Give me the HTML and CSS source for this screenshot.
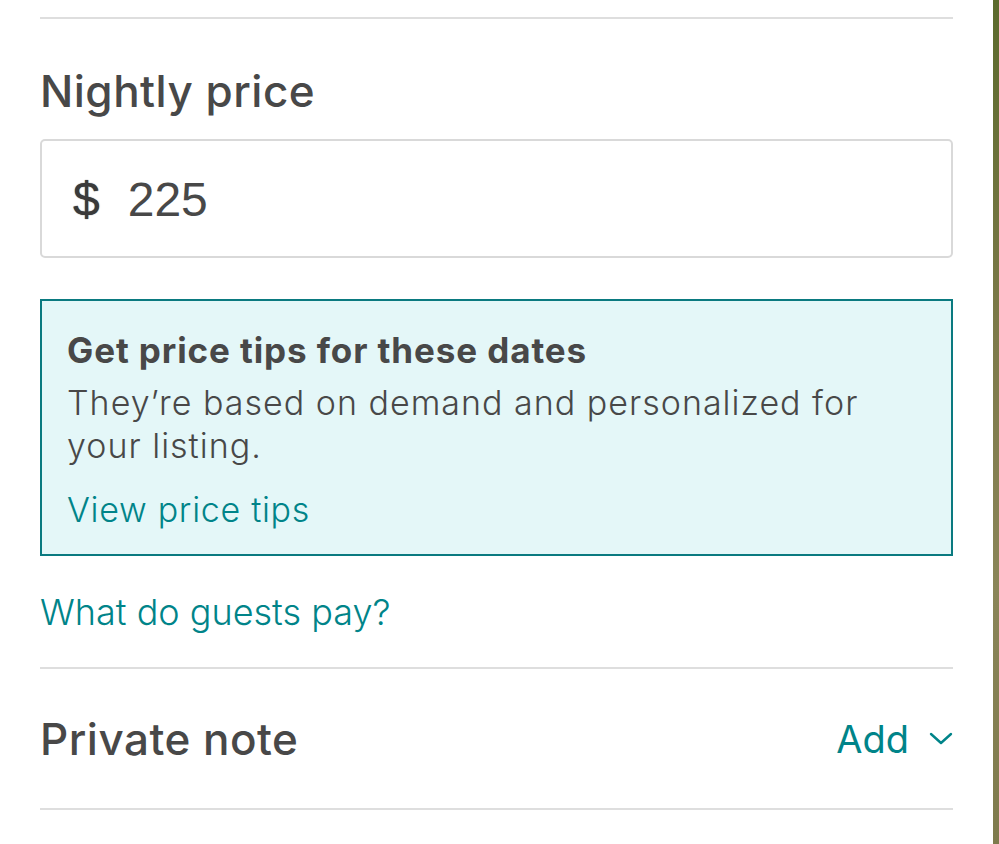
FILE: index.html
```html
<!DOCTYPE html>
<html>
<head>
    <link rel="stylesheet" href="styles.css">
</head>
<body>
    <div class="screen">
        <div class="panel">
            <hr class="divider top">

            <h2 class="section-title">Nightly price</h2>

            <div class="price-input">
                <span class="currency">$</span>
                <span class="amount">225</span>
            </div>

            <div class="tip-box">
                <div class="tip-title">Get price tips for these dates</div>
                <div class="tip-text">They’re based on demand and personalized for your listing.</div>
                <a class="link tip-link" href="#">View price tips</a>
            </div>

            <a class="link guests-link" href="#">What do guests pay?</a>

            <hr class="divider">

            <div class="note-row">
                <h2 class="section-title note-title">Private note</h2>
                <a class="link add-link" href="#">
                    Add
                    <svg width="24" height="14" viewBox="0 0 24 14">
                        <path d="M2 2 L12 11 L22 2" fill="none" stroke="#008489" stroke-width="2.4" stroke-linecap="round" stroke-linejoin="round"/>
                    </svg>
                </a>
            </div>

            <hr class="divider">
        </div>
        <div class="edge"></div>
    </div>
</body>
</html>
```

FILE: styles.css
```css
body {
    margin: 0;
    background: #ffffff;
    font-family: Inter, "Noto Sans", sans-serif;
    color: #484848;
}

.screen {
    display: flex;
    min-height: 844px;
}

.panel {
    flex: 1;
    padding: 0 40px 0 40px;
}

.edge {
    width: 6px;
    background: linear-gradient(to bottom, #5b6a2c, #7d7a4a 40%, #8a8558 70%, #7e7a4c);
}

.divider {
    border: none;
    border-top: 2px solid #dedede;
    margin: 0;
}

.divider.top {
    margin-top: 17px;
}

.section-title {
    font-size: 44px;
    font-weight: 500;
    margin: 0;
    line-height: 1;
    letter-spacing: 0.5px;
}

.panel > .section-title {
    margin-top: 50px;
}

.price-input {
    margin-top: 26px;
    height: 113px;
    border: 2px solid #d9d9d9;
    border-radius: 5px;
    display: flex;
    align-items: center;
    padding-left: 31px;
    padding-top: 2px;
    font-family: "Liberation Sans", Arial, sans-serif;
    font-size: 48px;
}

.currency {
    color: #3a3a3a;
    margin-right: 28px;
    text-shadow: 0 0 1px #3a3a3a;
}

.amount {
    color: #484848;
}

.tip-box {
    margin-top: 41px;
    border: 2px solid #0a7a80;
    background: #e4f7f8;
    padding: 28px 25px 23px 25px;
}

.tip-title {
    font-size: 35px;
    font-weight: 700;
    line-height: 43px;
    letter-spacing: 0.9px;
}

.tip-text {
    font-size: 34px;
    font-weight: 300;
    line-height: 43px;
    margin-top: 9px;
    letter-spacing: 1px;
}

.link {
    color: #008489;
    text-decoration: none;
    font-weight: 300;
}

.tip-link {
    display: block;
    font-size: 34px;
    line-height: 43px;
    margin-top: 21px;
    letter-spacing: 0.7px;
}

.guests-link {
    display: block;
    font-size: 36px;
    margin-top: 34px;
    margin-bottom: 33px;
}

.note-row {
    display: flex;
    align-items: center;
    justify-content: space-between;
    height: 139px;
}

.add-link {
    font-size: 38px;
    font-weight: 400;
    display: flex;
    align-items: center;
    gap: 20px;
}
```
